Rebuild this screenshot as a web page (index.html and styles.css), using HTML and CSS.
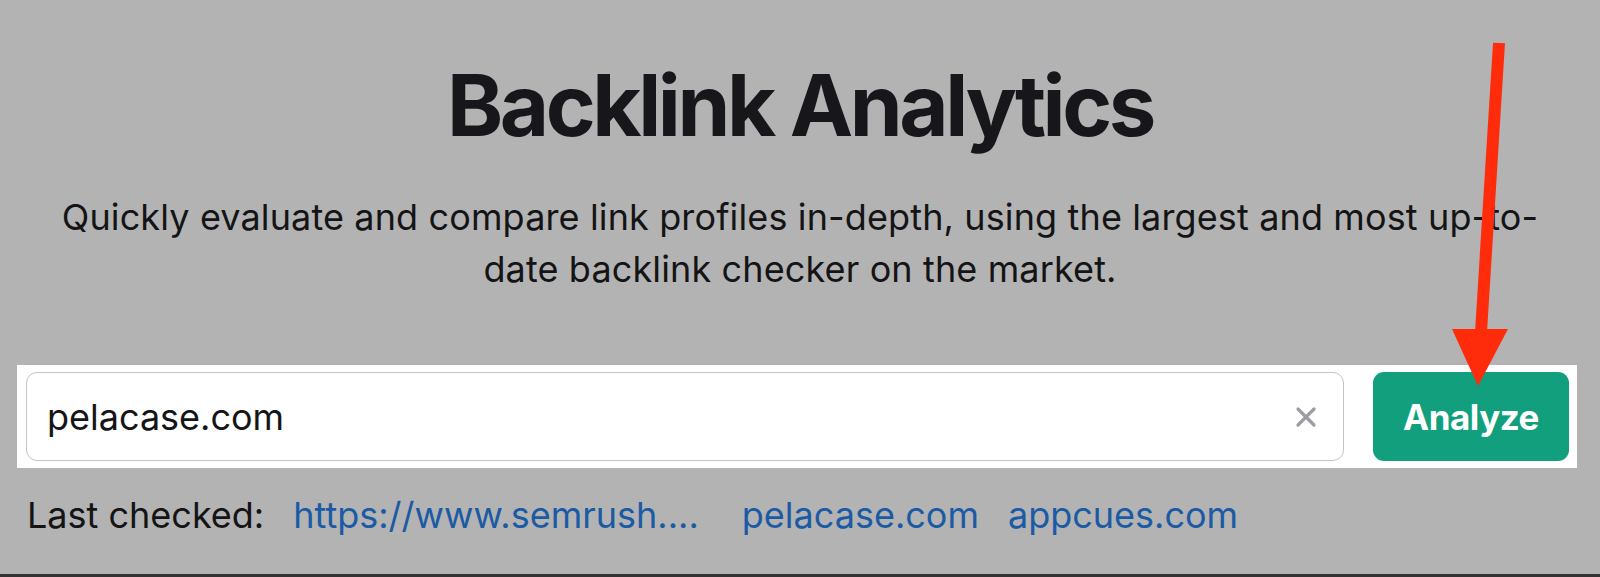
FILE: index.html
```html
<!DOCTYPE html>
<html lang="en">
<head>
  <meta charset="UTF-8">
  <title>Backlink Analytics</title>
  <link rel="stylesheet" href="styles.css">
</head>
<body>
  <div class="page">
    <h1 class="title">Backlink Analytics</h1>
    <p class="lead">Quickly evaluate and compare link profiles in-depth, using the largest and most up-to-<br>date backlink checker on the market.</p>

    <div class="search">
      <div class="field">
        <input type="text" class="field-input" value="pelacase.com">
        <svg class="clear" width="22" height="22" viewBox="0 0 22 22">
          <path d="M3 3 L19 19 M19 3 L3 19" stroke="#9c9ca3" stroke-width="3.2" stroke-linecap="round"/>
        </svg>
      </div>
      <button class="analyze">Analyze</button>
    </div>

    <div class="recent">
      <span class="recent-label">Last checked:</span>
      <a class="recent-link semrush" href="#">https://www.semrush....</a>
      <a class="recent-link" href="#">pelacase.com</a>
      <a class="recent-link" href="#">appcues.com</a>
    </div>

    <div class="bottom-bar"></div>
  </div>

  <!-- annotation arrow drawn over the page -->
  <svg class="arrow" width="1600" height="577" viewBox="0 0 1600 577">
    <path d="M1499 43 L1481 332" stroke="#ff2c0c" stroke-width="12"/>
    <polygon points="1452,329 1508,329 1478,386" fill="#ff2c0c"/>
  </svg>
</body>
</html>
```

FILE: styles.css
```css
html, body {
  margin: 0;
  padding: 0;
}
body {
  background: #b3b3b3;
  font-family: Inter, "Liberation Sans", sans-serif;
  color: #131316;
  height: 577px;
  overflow: hidden;
  position: relative;
}
.page {
  height: 577px;
  display: flex;
  flex-direction: column;
}
.title {
  margin: 56px 0 0;
  text-align: center;
  font-size: 85px;
  line-height: 100px;
  font-weight: 700;
  letter-spacing: -3.4px;
  color: #17171b;
}
.lead {
  margin: 35px 0 0;
  text-align: center;
  font-size: 36px;
  line-height: 52px;
  letter-spacing: 0.13px;
  color: #141416;
}
.search {
  margin: 70px 23px 0 17px;
  background: #fff;
  padding: 7px 8px 7px 9px;
  display: flex;
  gap: 29px;
}
.field {
  flex: 1;
  height: 87px;
  border: 1px solid #c4c4c8;
  border-radius: 11px;
  display: flex;
  align-items: center;
  padding: 0 26px 0 20px;
}
.field-input {
  flex: 1;
  border: none;
  outline: none;
  background: transparent;
  font-family: inherit;
  font-size: 36px;
  color: #151517;
  padding: 0;
}
.clear {
  display: block;
}
.analyze {
  width: 196px;
  height: 89px;
  border: none;
  border-radius: 11px;
  background: #129f7d;
  color: #fff;
  font-family: inherit;
  font-size: 35px;
  font-weight: 700;
  letter-spacing: -0.5px;
}
.recent {
  margin: 25px 0 0 27px;
  font-size: 36px;
  line-height: 44px;
  display: flex;
  gap: 29px;
}
.recent-label {
  color: #141416;
}
.recent-link {
  color: #1b5aa4;
  text-decoration: none;
}
.semrush {
  margin-right: 14px;
}
.bottom-bar {
  margin-top: auto;
  height: 3px;
  background: #333;
}
.arrow {
  position: absolute;
  left: 0;
  top: 0;
  pointer-events: none;
}
```
